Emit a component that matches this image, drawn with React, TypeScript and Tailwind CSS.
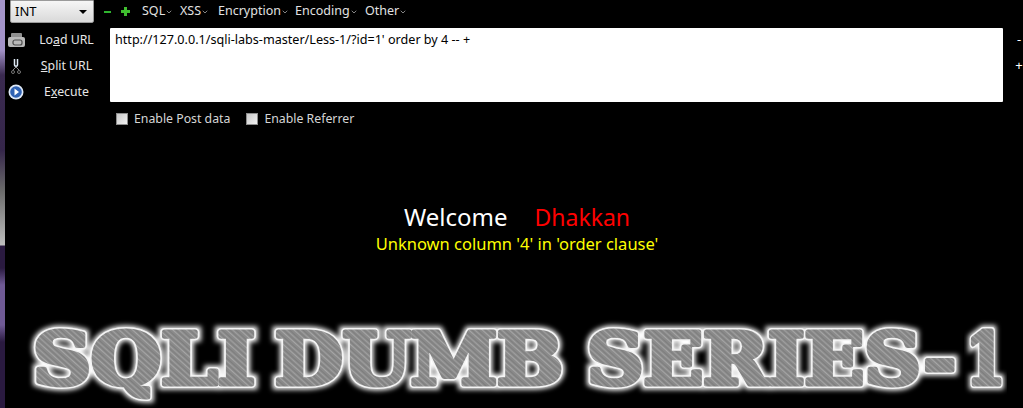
import { ChevronDown } from "lucide-react";

const menus = [
  { label: "SQL", width: "w-[38px]" },
  { label: "XSS", width: "w-[38px]" },
  { label: "Encryption", width: "w-[77px]" },
  { label: "Encoding", width: "w-[70px]" },
  { label: "Other", width: "w-[50px]" },
];

const words = [
  { text: "SQLI", x: 33, length: 222 },
  { text: "DUMB", x: 275, length: 288 },
  { text: "SERIES-", x: 587, length: 369 },
  { text: "1", x: 966, length: 39 },
];

function LoadIcon() {
  return (
    <svg width="17" height="14" viewBox="0 0 17 14">
      <rect x="3" y="0" width="11" height="5" rx="1" fill="#8f8f8f" />
      <rect x="0" y="4" width="17" height="10" rx="2" fill="#b9b9b9" />
      <rect x="5" y="7" width="9" height="5" rx="2" fill="none" stroke="#4d4d4d" strokeWidth="1.2" />
    </svg>
  );
}

function SplitIcon() {
  return (
    <svg width="10" height="16" viewBox="0 0 10 16">
      <path d="M3.500 1v6c0 1.500 3 1.500 3 0V1" fill="none" stroke="#dfeaf5" strokeWidth="1.500" />
      <path d="M5 9 2 12M5 9l3 3" stroke="#8a8a8a" strokeWidth="1" />
      <circle cx="2" cy="14" r="1.500" fill="none" stroke="#777777" />
      <circle cx="8" cy="14" r="1.500" fill="none" stroke="#777777" />
    </svg>
  );
}

function ExecuteIcon() {
  return (
    <svg width="16" height="16" viewBox="0 0 16 16">
      <circle cx="8" cy="8" r="7.500" fill="#dfe9f7" />
      <circle cx="8" cy="8" r="5.800" fill="#2f62b3" />
      <path d="M6.500 4.500 11 8l-4.500 3.500z" fill="#ffffff" />
    </svg>
  );
}

function SideButton({ children, icon }: { children: React.ReactNode; icon: React.ReactNode }) {
  return (
    <div className="flex h-[26px] items-center">
      <div className="flex w-[28px] justify-center pr-[6px]">{icon}</div>
      <div className="w-[67px] text-center text-[12.300px] text-[#e6e6e6]">{children}</div>
    </div>
  );
}

function CheckOption({ label }: { label: string }) {
  return (
    <div className="flex items-center gap-[6px]">
      <div className="h-[12px] w-[12px] border border-[#8c8c8c] bg-gradient-to-br from-[#c9c9c9] to-[#f2f2f2]" />
      <span className="text-[12.300px] text-[#d6d6d6]">{label}</span>
    </div>
  );
}

function Logo() {
  return (
    <svg width="1018" height="102" viewBox="5 306 1018 102" className="block">
      <defs>
        <pattern id="hatch" width="9" height="9" patternUnits="userSpaceOnUse" patternTransform="rotate(-48)">
          <rect width="9" height="9" fill="#8a8a8a" />
          <rect width="1" height="9" fill="#9e9e9e" />
          <rect x="2" width="1" height="9" fill="#7e7e7e" />
          <rect x="5" width="1" height="9" fill="#a6a6a6" />
          <rect x="7" width="1" height="9" fill="#808080" />
        </pattern>
        <filter id="glow" x="-5%" y="-30%" width="110%" height="160%">
          <feGaussianBlur stdDeviation="2.500" />
        </filter>
      </defs>
      {words.map((word) => (
        <g key={word.text} fontFamily="'DejaVu Serif', serif" fontWeight="700" fontSize="71">
          <text x={word.x} y="384" textLength={word.length} lengthAdjust="spacingAndGlyphs" fill="#ffffff" stroke="#ffffff" strokeWidth="11" filter="url(#glow)">
            {word.text}
          </text>
          <text x={word.x} y="384" textLength={word.length} lengthAdjust="spacingAndGlyphs" fill="#ffffff" stroke="#f4f4f4" strokeWidth="8" strokeLinejoin="round">
            {word.text}
          </text>
          <text x={word.x} y="384" textLength={word.length} lengthAdjust="spacingAndGlyphs" fill="url(#hatch)" stroke="url(#hatch)" strokeWidth="5" strokeLinejoin="round">
            {word.text}
          </text>
        </g>
      ))}
    </svg>
  );
}

export default function App() {
  return (
    <div className="flex h-[408px] w-[1023px] overflow-hidden bg-black font-['Noto_Sans',sans-serif]">
      <div className="h-full w-[5px] bg-[linear-gradient(to_bottom,#a393c8_0px,#a393c8_50px,#3a2a50_75px,#35264a_150px,#6a6a6a_190px,#bdbdbd_245px,#2a1a40_246px,#2a1a40_268px,#6f5a95_285px,#6f5a95_325px,#2a1a40_342px,#2a1a40_408px)]" />
      <main className="flex min-w-0 flex-1 flex-col">
        <header className="flex h-[28px] items-start pl-[5px]">
          <div className="flex h-[23px] w-[84px] items-center justify-between rounded-b-[2px] border border-[#9a9a9a] bg-gradient-to-b from-[#f6f6f6] to-[#d9d9d9] pl-[4px] pr-[6px] text-[13px] text-black">
            <span>INT</span>
            <span className="h-0 w-0 border-x-[4px] border-t-[4px] border-x-transparent border-t-black" />
          </div>
          <div className="ml-[10px] flex h-[23px] items-center gap-[10px]">
            <span className="h-[2px] w-[7px] bg-[#2fb52f]" />
            <svg width="9" height="9" viewBox="0 0 9 9">
              <path d="M3 0h3v3h3v3H6v3H3V6H0V3h3z" fill="#3fbf2f" />
            </svg>
          </div>
          <nav className="ml-[12px] flex h-[23px] items-center">
            {menus.map((menu) => (
              <div key={menu.label} className={`flex items-center text-[12.500px] text-[#e2e2e2] ${menu.width}`}>
                {menu.label}
                <ChevronDown size={8} strokeWidth={2} className="text-[#c8c8c8]" />
              </div>
            ))}
          </nav>
        </header>

        <section className="flex">
          <div className="-mt-[1px] flex w-[105px] flex-col">
            <SideButton icon={<LoadIcon />}>
              Lo<u>a</u>d URL
            </SideButton>
            <SideButton icon={<SplitIcon />}>
              <u>S</u>plit URL
            </SideButton>
            <SideButton icon={<ExecuteIcon />}>
              E<u>x</u>ecute
            </SideButton>
          </div>
          <div className="h-[74px] w-[893px] rounded-[1px] bg-white px-[5px] pt-[2px] text-[12.600px] leading-[20px] text-black">
            http://127.0.0.1/sqli-labs-master/Less-1/?id=1' order by 4 -- +
          </div>
          <div className="-mt-[2px] flex flex-1 flex-col items-center pl-[12px] text-[13px] leading-[26px] text-white">
            <span>-</span>
            <span>+</span>
          </div>
        </section>

        <div className="ml-[111px] mt-[1px] flex h-[26px] items-center gap-[16px]">
          <CheckOption label="Enable Post data" />
          <CheckOption label="Enable Referrer" />
        </div>

        <div className="mt-[70px] flex flex-col items-center pl-[6px]">
          <div className="flex gap-[27px] text-[24px] leading-[30px]">
            <span className="text-white">Welcome</span>
            <span className="text-[23px] text-[#ff0000]">Dhakkan</span>
          </div>
          <div className="text-[16.500px] leading-[24px] text-[#ffff00]">Unknown column '4' in 'order clause'</div>
        </div>

        <div className="mt-auto">
          <Logo />
        </div>
      </main>
    </div>
  );
}
